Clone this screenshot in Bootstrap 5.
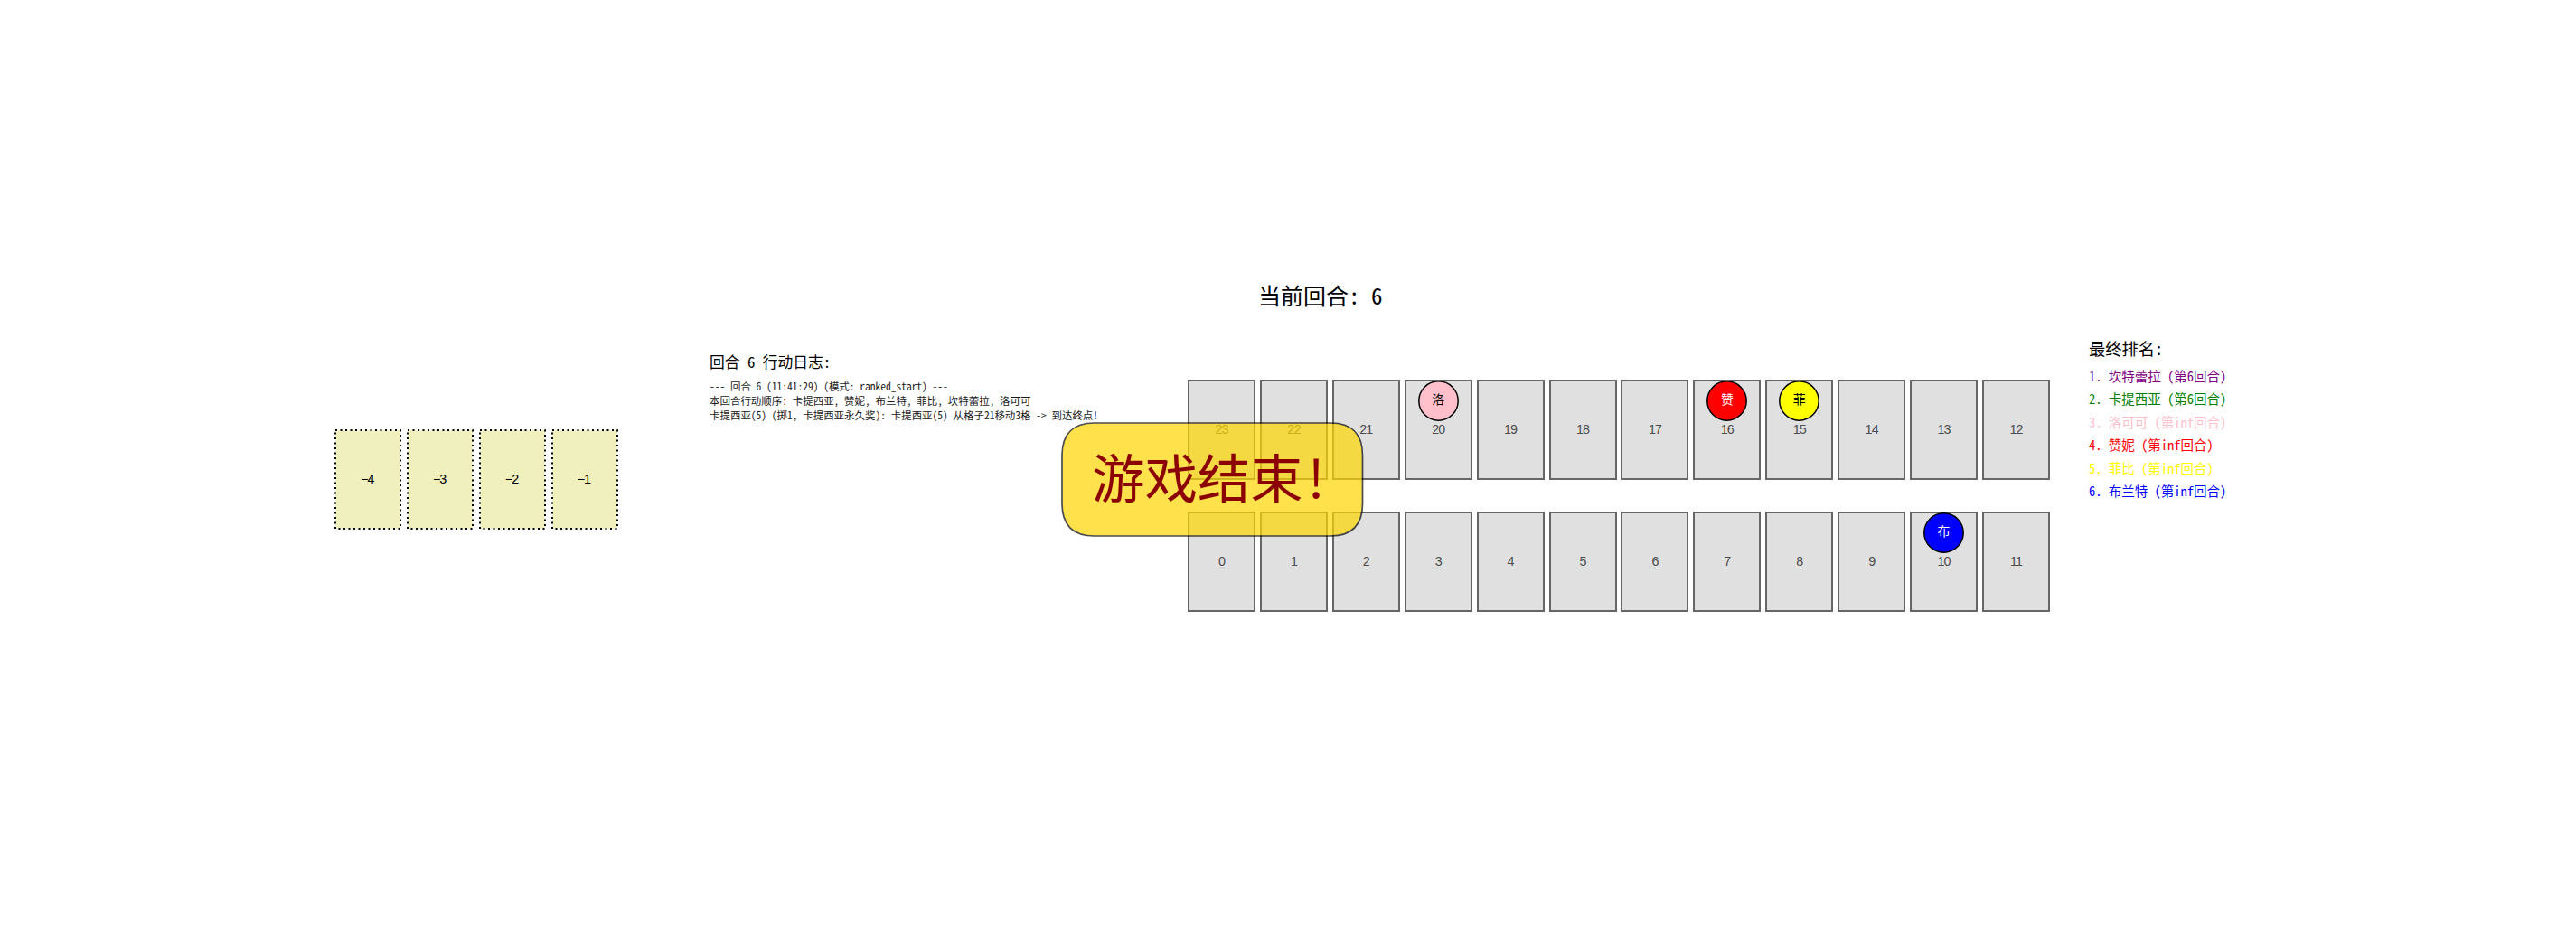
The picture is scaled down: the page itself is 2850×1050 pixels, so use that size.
<!DOCTYPE html>
<html lang="zh-CN">
<head>
<meta charset="utf-8">
<title>当前回合: 6</title>
<link rel="stylesheet" href="https://cdn.jsdelivr.net/npm/bootstrap@5.3.0/dist/css/bootstrap.min.css">
<style>
body{width:2850px;height:1050px;overflow:hidden;background:#fff;color:#000;font-family:"Noto Sans Mono CJK SC","Noto Sans CJK SC",sans-serif;line-height:1}
.board{height:1050px}
.round-title{padding:314px 0 0 1392px;font-size:25px;height:374px}
.stage{padding-left:370px}
.start-lane{gap:7.4px;margin-top:102px;width:313px}
.slot{width:72.5px;height:109px}
.slot,.cell{font-family:"Liberation Sans","Noto Sans CJK SC",sans-serif;font-size:14.3px;letter-spacing:-.9px}
.slot svg{inset:0;overflow:visible}
.log{margin-left:102px;width:529px;padding-top:18px;font-size:11.47px;line-height:16.2px;color:#1a1a1a}
.log-title{font-size:16.8px;line-height:17px;margin-bottom:10px;color:#000}
.track{width:954px;margin-top:46px;gap:35px}
.lane{gap:4.91px}
.cell{width:75px;height:111px;border:2px solid #666;background:#e0e0e0;color:#4d4d4d}
.token{width:45px;height:45px;top:-1.5px;left:13px;font-size:13.9px;letter-spacing:0}
.token svg{inset:0}
.ranks{margin-left:43px;font-size:14.5px;line-height:25.4px}
.rank-title{font-size:18.3px;line-height:20px;margin:1px 0 8px}
.banner{left:1174px;top:467px;width:335px;height:127px;color:#8b0000;font-size:58.3px}
.banner svg{inset:0}
.banner-text{padding:0 4px 8px 0}
</style>
<script src="https://cdn.jsdelivr.net/npm/bootstrap@5.3.0/dist/js/bootstrap.bundle.min.js"></script>
</head>
<body>
<main class="board position-relative text-nowrap">
<div class="round-title">当前回合: 6</div>
<div class="stage d-flex align-items-start">
<div class="start-lane d-flex" id="start"></div>
<section class="log"><div class="log-title">回合 6 行动日志:</div><div>--- 回合 6 (11:41:29) (模式: ranked_start) ---</div><div>本回合行动顺序: 卡提西亚, 赞妮, 布兰特, 菲比, 坎特蕾拉, 洛可可</div><div>卡提西亚(5) (掷1, 卡提西亚永久奖): 卡提西亚(5) 从格子21移动3格 -&gt; 到达终点!</div></section>
<section class="track d-flex flex-column"><div class="lane d-flex" id="top"></div><div class="lane d-flex" id="bottom"></div></section>
<section class="ranks"><div class="rank-title">最终排名:</div>
<div style="color:purple">1. 坎特蕾拉 (第6回合)</div><div style="color:green">2. 卡提西亚 (第6回合)</div><div style="color:pink">3. 洛可可 (第inf回合)</div><div style="color:red">4. 赞妮 (第inf回合)</div><div style="color:yellow">5. 菲比 (第inf回合)</div><div style="color:blue">6. 布兰特 (第inf回合)</div></section>
</div>
<div class="banner position-absolute d-flex align-items-center justify-content-center"><svg class="position-absolute" width="335" height="127"><path d="M37 1H298Q333.500 1 333.500 37V90Q333.500 126 298 126H37Q1 126 1 90V37Q1 1 37 1Z" fill="gold" stroke="#000" stroke-width="1.700" opacity=".7"/></svg><span class="banner-text position-relative">游戏结束!</span></div>
</main>
<script>
const tokens={20:['洛','pink','#000'],16:['赞','red','#fff'],15:['菲','yellow','#000'],10:['布','blue','#fff']};
const cell=n=>{const t=tokens[n];return `<div class="cell flex-shrink-0 position-relative d-flex align-items-center justify-content-center">${n}${t?`<span class="token position-absolute d-flex align-items-center justify-content-center" style="color:${t[2]}"><svg class="position-absolute" width="45" height="45"><circle cx="22.500" cy="22.500" r="21.700" fill="${t[1]}" stroke="#000" stroke-width="1.500"/></svg><span class="position-relative">${t[0]}</span></span>`:''}</div>`};
const seq=[...Array(12).keys()];
document.getElementById('bottom').innerHTML=seq.map(cell).join('');
document.getElementById('top').innerHTML=seq.map(i=>cell(23-i)).join('');
document.getElementById('start').innerHTML=[4,3,2,1].map(n=>`<div class="slot flex-shrink-0 position-relative d-flex align-items-center justify-content-center"><svg class="position-absolute" width="73" height="110"><rect x="1" y="0" width="72" height="109" fill="#f0f0be" stroke="#000" stroke-width="2" stroke-dasharray="2 3.5"/></svg><span class="position-relative">−${n}</span></div>`).join('');
</script>
</body>
</html>
